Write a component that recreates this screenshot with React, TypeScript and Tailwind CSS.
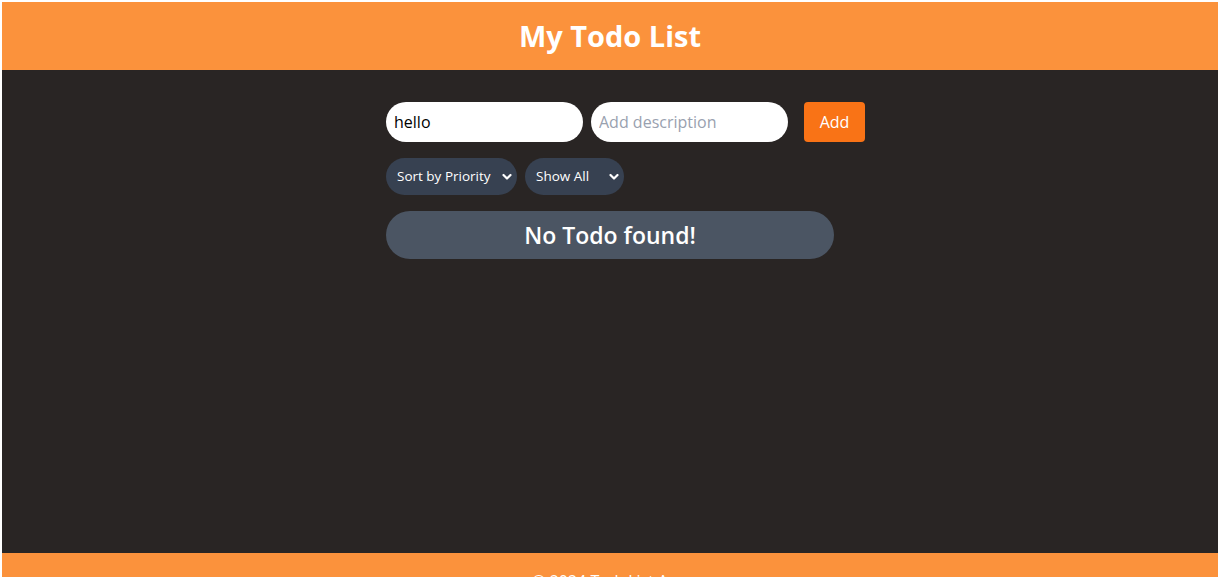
import React, { useState } from 'react';

const App: React.FC = () => {
  const [title, setTitle] = useState('hello');
  const [desc, setDesc] = useState('');
  const [sort, setSort] = useState('priority');
  const [filter, setFilter] = useState('all');

  const chevron = (
    <svg
      viewBox="0 0 10 7"
      className="pointer-events-none absolute right-[5px] top-1/2 h-[7px] w-[10px] -translate-y-1/2"
      fill="none"
      stroke="white"
      strokeWidth="2.2"
      strokeLinecap="round"
      strokeLinejoin="round"
    >
      <path d="M1.5 1.5l3.5 3.5 3.5-3.5" />
    </svg>
  );

  return (
    <div className="h-[577px] overflow-hidden bg-white pl-[2px] pr-[6px] pt-[2px] font-['Open_Sans',sans-serif]">
      {/* Header */}
      <header className="flex h-[68px] items-center justify-center bg-[#fb923c]">
        <h1 className="text-[29px] font-bold text-white">My Todo List</h1>
      </header>

      {/* Main */}
      <main className="h-[483px] bg-[#292524] pt-8">
        <div className="mx-auto max-w-md">
          <div className="flex items-center gap-2 whitespace-nowrap">
            <input
              value={title}
              onChange={(e) => setTitle(e.target.value)}
              className="h-10 w-[197px] shrink-0 rounded-full bg-white px-2 text-base text-black outline-none"
            />
            <input
              value={desc}
              onChange={(e) => setDesc(e.target.value)}
              placeholder="Add description"
              className="h-10 w-[197px] shrink-0 rounded-full bg-white px-2 text-base text-black outline-none placeholder:text-gray-400"
            />
            <button className="ml-2 h-10 w-[61px] shrink-0 rounded-sm bg-[#f97316] text-base text-white">
              Add
            </button>
          </div>

          <div className="mt-4 flex gap-2">
            <div className="relative">
              <select
                value={sort}
                onChange={(e) => setSort(e.target.value)}
                className="h-[37px] w-[131px] appearance-none rounded-full bg-[#374151] pl-[11px] text-[13.5px] text-white outline-none"
              >
                <option value="priority">Sort by Priority</option>
                <option value="date">Sort by Date</option>
              </select>
              {chevron}
            </div>
            <div className="relative">
              <select
                value={filter}
                onChange={(e) => setFilter(e.target.value)}
                className="h-[37px] w-[99px] appearance-none rounded-full bg-[#374151] pl-[11px] text-[13.5px] text-white outline-none"
              >
                <option value="all">Show All</option>
                <option value="done">Completed</option>
                <option value="open">Pending</option>
              </select>
              {chevron}
            </div>
          </div>

          <div className="mt-4 flex h-12 items-center justify-center rounded-full bg-[#4b5563]">
            <span className="text-[23px] font-semibold text-white">No Todo found!</span>
          </div>
        </div>
      </main>

      {/* Footer */}
      <footer className="h-[60px] bg-[#fb923c] pt-4 text-center text-base text-white">
        © 2024 TodoList App
      </footer>
    </div>
  );
};

export default App;
